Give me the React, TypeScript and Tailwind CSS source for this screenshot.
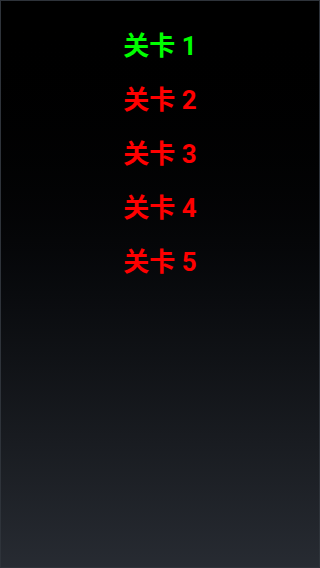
export default function App() {
  const levels = [1, 2, 3, 4, 5];
  return (
    <div className="w-[320px] h-[568px] border border-[#2e333a] bg-gradient-to-b from-[#000000] to-[#272b32] flex flex-col items-center pt-[25px] gap-[14px]" style={{ fontFamily: 'Roboto, "Noto Sans CJK SC", sans-serif' }}>
      {levels.map((n) => (
        <div key={n} className={`h-[40px] flex items-center text-[26px] font-bold leading-none ${n === 1 ? 'text-[#00ff00]' : 'text-[#ff0000]'}`}>
          关卡 {n}
        </div>
      ))}
    </div>
  );
}
